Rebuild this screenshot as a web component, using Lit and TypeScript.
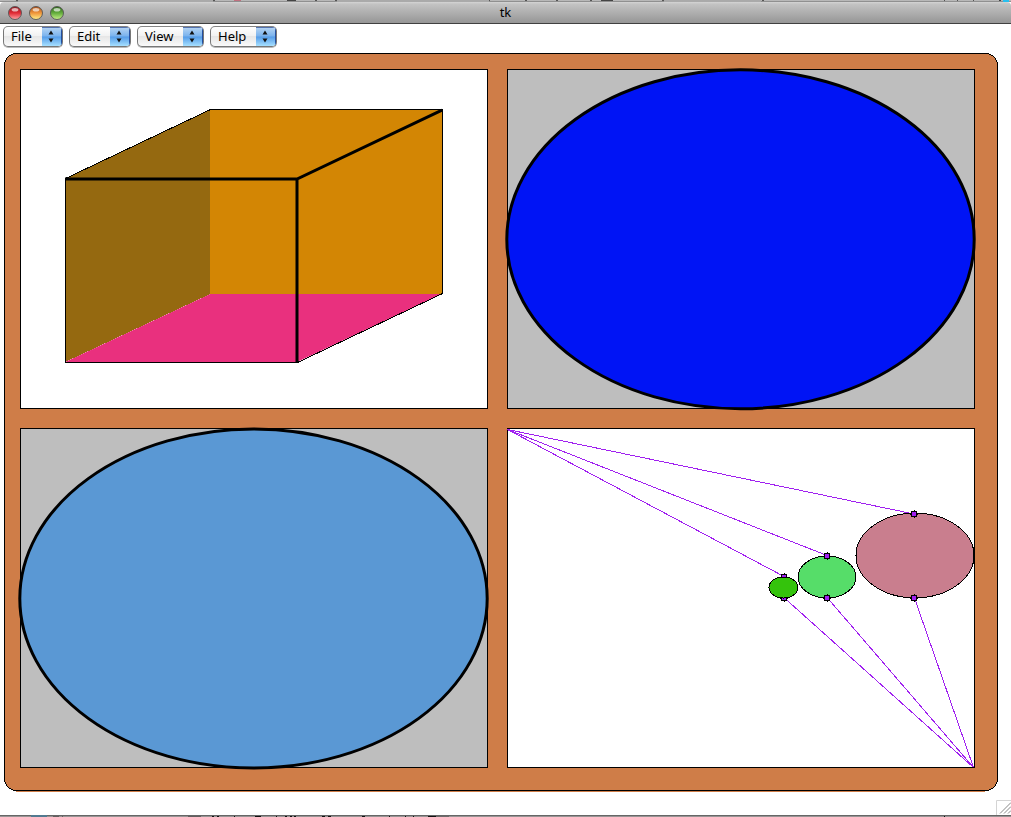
import { LitElement, html, svg, css } from "lit";
import { customElement, property } from "lit/decorators.js";

@customElement("menu-popup")
class MenuPopup extends LitElement {
  @property() label = "";
  @property({ type: Number }) width = 60;
  static styles = css`
    :host { display: block; }
    .button { box-sizing: border-box; height: 21px; display: flex; border: 1px solid #777; border-top-color: #858585; border-radius: 5px; overflow: hidden; background: linear-gradient(#fff, #f2f2f2 45%, #e6e6e6 50%, #fafafa); box-shadow: 0 1px 0 #bbb; font: 13px/19px "Noto Sans", "Open Sans", sans-serif; color: #000; }
    .label { flex: 1; padding-left: 7px; white-space: nowrap; }
    .arrows { width: 20px; height: 19px; background: linear-gradient(#b9d6f3, #79b2ed 48%, #559ce8 52%, #a6e0ff); box-shadow: inset -1px 0 #244fa0, inset 0 1px #5272ae; }
    svg { display: block; }
  `;
  render() {
    return html`<div class="button" style="width:${this.width}px">
      <span class="label">${this.label}</span>
      <span class="arrows"><svg width="20" height="19"><path d="M6.5 7.5 9 3.5l2.5 4zM6.5 11.5h5L9 15.5z" fill="#111" /></svg></span>
    </div>`;
  }
}

@customElement("app-root")
class AppRoot extends LitElement {
  static styles = css`
    :host { display: block; width: 1011px; height: 817px; overflow: hidden; background: #fff; }
    .page { display: flex; flex-direction: column; height: 817px; }
    .strip { display: block; flex: none; }
    .title { box-sizing: border-box; height: 22px; flex: none; display: grid; grid-template-columns: 100px 1fr 100px; align-items: start; background: linear-gradient(#d5d5d5 0, #c3c3c3 10%, #969696); border-bottom: 1px solid #404040; border-radius: 4px 4px 0 0; font: 13px/20px "Noto Sans", "Open Sans", sans-serif; text-align: center; }
    .lights { display: block; }
    .menus { height: 24px; flex: none; box-sizing: border-box; display: flex; gap: 6px; padding: 2px 3px 0; }
    .canvas { display: block; flex: none; }
  `;

  private light(x: number, id: string) {
    return svg`<circle cx=${x} cy="11" r="6.5" fill="url(#${id})" stroke="#555" stroke-width=".9" />
      <ellipse cx=${x} cy="7.7" rx="3.4" ry="1.8" fill="#fff" opacity=".65" />`;
  }

  private gradient(id: string, top: string, mid: string, low: string) {
    return svg`<linearGradient id=${id} x1="0" y1="0" x2="0" y2="1">
      <stop offset="0" stop-color=${top} /><stop offset=".5" stop-color=${mid} /><stop offset="1" stop-color=${low} />
    </linearGradient>`;
  }

  private knob(x: number, y: number) {
    return svg`<g shape-rendering="crispEdges">
      <rect x=${x - 3} y=${y - 3} width="6" height="6" fill="#000" />
      <path d="M${x} ${y - 4}h1v8h-1zM${x - 4} ${y}h8v1h-8z" fill="#000" />
      <rect x=${x - 2} y=${y - 2} width="4" height="4" fill="#a020f0" />
    </g>`;
  }

  render() {
    return html`<div class="page">
      <svg class="strip" width="1011" height="2" shape-rendering="crispEdges">
        <rect width="1011" height="2" fill="#b8b8b8" />
        <rect y="1" width="1011" height="1" fill="#909090" />
        <path d="M16 .5h2M213 .5h2M315 .5h2M335 .5h2M488 .5h2M525 .5h2M556 .5h2M590 .5h2M662 .5h2M762 .5h2M944 .5h1M957 .5h1M973 .5h1" stroke="#555" />
        <path d="M18 1h195M337 1h152M664 1h97" stroke="#aaa" stroke-width="2" />
        <path d="M234 .5h7" stroke="#c0707f" />
        <path d="M287 .5h9M601 .5h12M999 .5h2" stroke="#444" />
        <path d="M1003 1h6" stroke="#28bfee" stroke-width="2" />
      </svg>
      <div class="title">
        <svg class="lights" width="100" height="21">
          <defs>
            ${this.gradient("red", "#8c1720", "#e22b35", "#ffa6a6")}
            ${this.gradient("amber", "#a84c16", "#f0953a", "#fff18a")}
            ${this.gradient("green", "#2b6419", "#63ad3c", "#c8f28a")}
          </defs>
          ${this.light(15, "red")}${this.light(36, "amber")}${this.light(57, "green")}
        </svg>
        <span>tk</span>
      </div>
      <div class="menus">
        <menu-popup label="File" .width=${60}></menu-popup>
        <menu-popup label="Edit" .width=${62}></menu-popup>
        <menu-popup label="View" .width=${67}></menu-popup>
        <menu-popup label="Help" .width=${67}></menu-popup>
      </div>
      <svg class="canvas" width="1011" height="767" viewBox="0 48 1011 767">
        <path d="M16 791.5H985" stroke="#cf7d48" />
        <rect x="4.5" y="53.5" width="993" height="737" rx="12" fill="#cf7d48" stroke="#000" shape-rendering="crispEdges" />
        <g stroke="#000" shape-rendering="crispEdges">
          <rect x="20.5" y="69.5" width="467" height="339" fill="#fff" />
          <rect x="507.5" y="69.5" width="467" height="339" fill="#bebebe" />
          <rect x="20.5" y="428.5" width="467" height="339" fill="#bebebe" />
          <rect x="507.5" y="428.5" width="467" height="339" fill="#fff" />
        </g>
        <path d="M210 110H442V294H210z" fill="#d38604" />
        <path d="M210 294H442L297 362H65z" fill="#e9307e" />
        <path d="M210 110V294L65 362V179z" fill="#956910" shape-rendering="crispEdges" />
        <path d="M65.5 179V362.5H297.5L442.5 293.5V109.5H210.5L65.5 178.5" fill="none" stroke="#000" shape-rendering="crispEdges" />
        <path d="M65 179.1H297L442 110.1M297 179V362" fill="none" stroke="#000" stroke-width="3" />
        <ellipse cx="740.5" cy="239.3" rx="233.7" ry="169.5" fill="#0014f5" stroke="#000" stroke-width="3" />
        <ellipse cx="253.5" cy="598.5" rx="233.7" ry="169.5" fill="#5a98d4" stroke="#000" stroke-width="3" />
        <g stroke="#a020f0" fill="none" shape-rendering="crispEdges">
          <path d="M507.5 429.5L784 576.5M507.5 429.5L827 555.5M507.5 429.5L914 514" />
          <path d="M784.5 598L973.5 767.5M827.5 598L973.5 767.5M914.5 598L973.5 767.5" />
        </g>
        ${this.knob(784, 577)}${this.knob(784, 598)}
        <g stroke="#000" shape-rendering="crispEdges">
          <ellipse cx="783.5" cy="587.5" rx="14.5" ry="10.5" fill="#34c30c" />
          <ellipse cx="827" cy="577" rx="29" ry="21" fill="#56dd69" />
          <ellipse cx="915" cy="555.5" rx="59" ry="42.3" fill="#c97e8e" />
        </g>
        ${this.knob(827, 556)}${this.knob(827, 598)}${this.knob(914, 514)}${this.knob(914, 598)}
        <path d="M996.5 815V800.5H1011" fill="none" stroke="#d4d4d4" />
        <path d="M1000 813.5L1011 802.5M1004 813.5L1011 806.5M1008 813.5L1011 810.5" stroke="#888" />
      </svg>
      <svg class="strip" width="1011" height="2" shape-rendering="crispEdges">
        <rect width="1011" height="2" fill="#989494" />
        <rect width="1011" height="1" fill="#666" />
        <path d="M31 1h16" stroke="#527a90" stroke-width="2" />
        <path d="M53 1.5h6M62 1.5h1M188 1.5h13" stroke="#625e5e" />
        <path d="M212 1.5h2M217 1.5h2M234 1.5h1M255 1.5h6M276 1.5h1M285 1.5h2M290 1.5h2M294 1.5h2M322 1.5h3M328 1.5h3M362 1.5h3M389 1.5h1M405 1.5h1M413 1.5h1M428 1.5h8M944 1.5h1" stroke="#111" />
        <path d="M436 1.5h13" stroke="#6e6a6a" />
      </svg>
    </div>`;
  }
}
